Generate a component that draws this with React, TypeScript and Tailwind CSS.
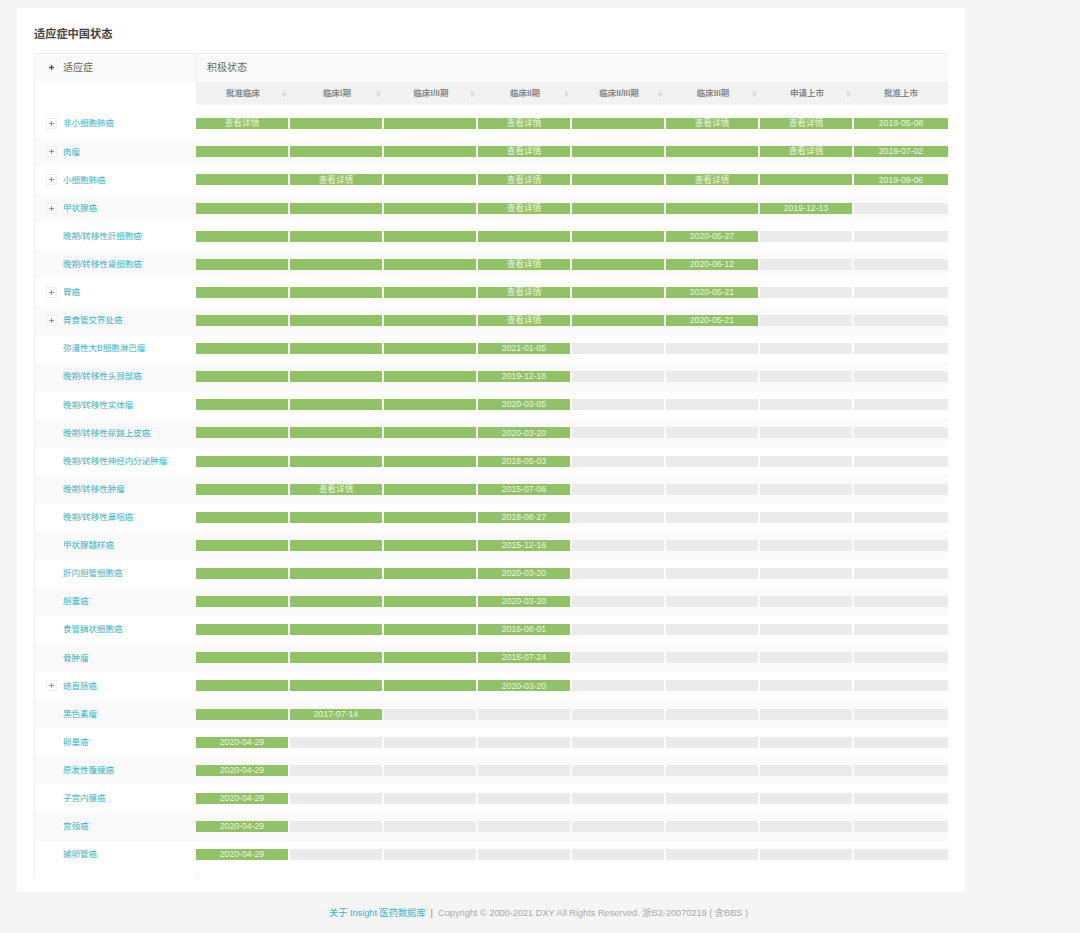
import React from 'react'

const stages = ['批准临床', '临床I期', '临床I/II期', '临床II期', '临床II/III期', '临床III期', '申请上市', '批准上市']

// g = green with nothing in it, d = 查看详情, x = not reached, anything else is a date
const rows: { name: string; expand?: boolean; cells: string[] }[] = [
  { name: '非小细胞肺癌', expand: true, cells: ['d', 'g', 'g', 'd', 'g', 'd', 'd', '2018-05-08'] },
  { name: '肉瘤', expand: true, cells: ['g', 'g', 'g', 'd', 'g', 'g', 'd', '2019-07-02'] },
  { name: '小细胞肺癌', expand: true, cells: ['g', 'd', 'g', 'd', 'g', 'd', 'g', '2019-09-06'] },
  { name: '甲状腺癌', expand: true, cells: ['g', 'g', 'g', 'd', 'g', 'g', '2019-12-13', 'x'] },
  { name: '晚期/转移性肝细胞癌', cells: ['g', 'g', 'g', 'g', 'g', '2020-05-27', 'x', 'x'] },
  { name: '晚期/转移性肾细胞癌', cells: ['g', 'g', 'g', 'd', 'g', '2020-06-12', 'x', 'x'] },
  { name: '胃癌', expand: true, cells: ['g', 'g', 'g', 'd', 'g', '2020-05-21', 'x', 'x'] },
  { name: '胃食管交界处癌', expand: true, cells: ['g', 'g', 'g', 'd', 'g', '2020-05-21', 'x', 'x'] },
  { name: '弥漫性大B细胞淋巴瘤', cells: ['g', 'g', 'g', '2021-01-05', 'x', 'x', 'x', 'x'] },
  { name: '晚期/转移性头颈部癌', cells: ['g', 'g', 'g', '2019-12-18', 'x', 'x', 'x', 'x'] },
  { name: '晚期/转移性实体瘤', cells: ['g', 'g', 'g', '2020-03-05', 'x', 'x', 'x', 'x'] },
  { name: '晚期/转移性尿路上皮癌', cells: ['g', 'g', 'g', '2020-03-20', 'x', 'x', 'x', 'x'] },
  { name: '晚期/转移性神经内分泌肿瘤', cells: ['g', 'g', 'g', '2018-05-03', 'x', 'x', 'x', 'x'] },
  { name: '晚期/转移性肿瘤', cells: ['g', 'd', 'g', '2015-07-06', 'x', 'x', 'x', 'x'] },
  { name: '晚期/转移性鼻咽癌', cells: ['g', 'g', 'g', '2018-08-27', 'x', 'x', 'x', 'x'] },
  { name: '甲状腺髓样癌', cells: ['g', 'g', 'g', '2015-12-16', 'x', 'x', 'x', 'x'] },
  { name: '肝内胆管细胞癌', cells: ['g', 'g', 'g', '2020-03-20', 'x', 'x', 'x', 'x'] },
  { name: '胆囊癌', cells: ['g', 'g', 'g', '2020-03-20', 'x', 'x', 'x', 'x'] },
  { name: '食管鳞状细胞癌', cells: ['g', 'g', 'g', '2016-08-01', 'x', 'x', 'x', 'x'] },
  { name: '骨肿瘤', cells: ['g', 'g', 'g', '2018-07-24', 'x', 'x', 'x', 'x'] },
  { name: '结直肠癌', expand: true, cells: ['g', 'g', 'g', '2020-03-20', 'x', 'x', 'x', 'x'] },
  { name: '黑色素瘤', cells: ['g', '2017-07-14', 'x', 'x', 'x', 'x', 'x', 'x'] },
  { name: '卵巢癌', cells: ['2020-04-29', 'x', 'x', 'x', 'x', 'x', 'x', 'x'] },
  { name: '原发性腹膜癌', cells: ['2020-04-29', 'x', 'x', 'x', 'x', 'x', 'x', 'x'] },
  { name: '子宫内膜癌', cells: ['2020-04-29', 'x', 'x', 'x', 'x', 'x', 'x', 'x'] },
  { name: '宫颈癌', cells: ['2020-04-29', 'x', 'x', 'x', 'x', 'x', 'x', 'x'] },
  { name: '输卵管癌', cells: ['2020-04-29', 'x', 'x', 'x', 'x', 'x', 'x', 'x'] },
]

const Plus = ({ dark = false }: { dark?: boolean }) => (
  <svg width="5" height="5" viewBox="0 0 5 5" className={dark ? 'text-[#555]' : 'text-[#999]'}>
    <path d="M0 2.5h5M2.5 0v5" stroke="currentColor" strokeWidth={dark ? 1.3 : 1} />
  </svg>
)

const StageArrow = () => (
  <svg width="4" height="8" viewBox="0 0 4 8" className="absolute right-[3px] top-[8px] text-[#dddddd]">
    <path d="M0 0l4 4-4 4z" fill="currentColor" />
  </svg>
)

const Bar = ({ value }: { value: string }) => {
  if (value === 'x') return <div className="h-[11px] mr-[2px] last:mr-0 bg-[#ebebeb]" />
  return (
    <div className="h-[11px] mr-[2px] last:mr-0 bg-[#92c268] flex items-center justify-center text-[8.7px] leading-none text-[#eaf4e0] whitespace-nowrap">
      {value === 'd' ? '查看详情' : value === 'g' ? '' : value}
    </div>
  )
}

export default function App() {
  return (
    <div
      className="min-h-[933px] bg-[#f5f5f5] pt-2 w-[1080px]"
      style={{ fontFamily: '"Liberation Sans", "Noto Sans CJK SC", sans-serif' }}
    >
      <div className="ml-[17px] w-[948px] h-[884px] bg-white pt-[19px] px-[17px]">
        <h2 className="text-[11.2px] leading-[15px] font-bold text-[#444] mb-[11px]">适应症中国状态</h2>

        <div className="w-[914px] border-l border-[#f0f0f0]">
          {/* Header */}
          <div className="flex h-[29px] bg-[#fafafa] border-t border-[#eeeeee] text-[10px] text-[#666] pb-[2px]">
            <div className="w-[162px] flex items-center border-r border-[#eeeeee] -mb-[2px] pb-[2px]">
              <span className="ml-[14px] mr-[9px] flex"><Plus dark /></span>
              <span>适应症</span>
            </div>
            <div className="flex-1 flex items-center pl-[10px]">积极状态</div>
          </div>

          {/* Stage names */}
          <div className="flex h-[27.7px] items-start">
            <div className="w-[161px]" />
            <div className="flex-1 grid grid-cols-8 h-[23px] bg-[#f2f2f2]">
              {stages.map((stage, index) => (
                <div key={stage} className="relative flex items-center justify-center text-[8.5px] font-semibold text-[#888]">
                  {stage}
                  {index < stages.length - 1 && <StageArrow />}
                </div>
              ))}
            </div>
          </div>

          {/* Data rows */}
          {rows.map((row, index) => (
            <div key={row.name} className={`flex h-[28.12px] items-center ${index % 2 === 1 ? 'bg-[#fafafa]' : 'bg-white'}`}>
              <div className="w-[161px] h-full flex items-center">
                <div className="w-[28px] flex justify-end pr-[6px]">
                  {row.expand && (
                    <span className="w-[11px] h-[11px] bg-white border border-[#f0f0f0] flex items-center justify-center">
                      <Plus />
                    </span>
                  )}
                </div>
                <span className="text-[8.5px] leading-none text-[#38b4c8] whitespace-nowrap">{row.name}</span>
              </div>
              <div className="flex-1 grid grid-cols-8">
                {row.cells.map((cell, cellIndex) => (
                  <Bar key={cellIndex} value={cell} />
                ))}
              </div>
            </div>
          ))}

          <div className="flex h-[8px]">
            <div className="w-[162px] border-r border-[#f2f2f2]" />
          </div>
        </div>
      </div>

      <div className="w-full pr-[3px] pt-[15px] flex justify-center text-[9.2px] leading-[12px] text-[#aaaaaa] whitespace-pre">
        <span className="text-[#38b4c8]">关于 Insight 医药数据库</span>
        <span className="text-[#888]">  |  </span>
        <span>Copyright © 2000-2021 DXY All Rights Reserved. 浙B2-20070219 ( 含BBS )</span>
      </div>
    </div>
  )
}
